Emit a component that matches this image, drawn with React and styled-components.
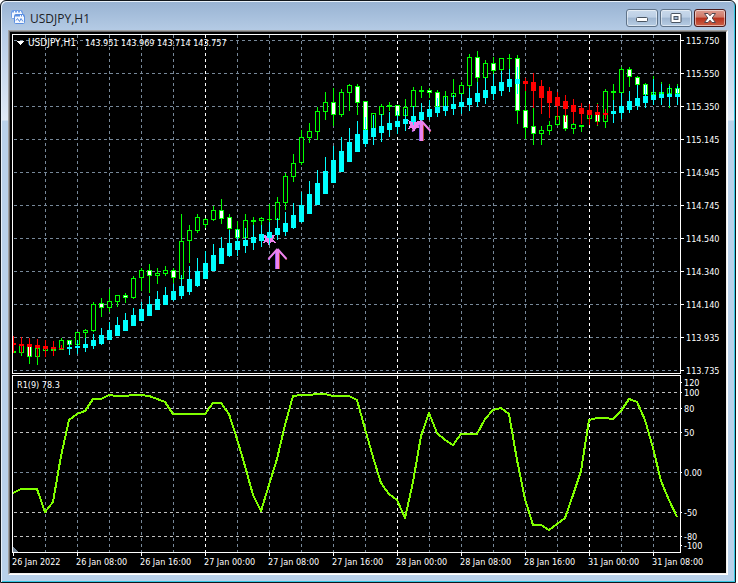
import React from 'react'

import styled, { createGlobalStyle } from 'styled-components'

const GlobalStyle = createGlobalStyle`
    body {
        margin: 0;
        background-color: white;
    }
`
const Window = styled.main`
    margin-right: 2px;
    padding: 1px 7px 7px;
    border: 1px solid #10161c;
    border-radius: 6px 6px 0 0;
    box-shadow: inset 1px 1px 0 #e8f1fa, inset -1px -1px 0 #35c8e4;
    background: linear-gradient(#98b3d3 0, #b7cde6 32px, #dfe9f5 119px, #b9d1ea 120px);
`
const TitleBar = styled.header`
    height: 28px;
    display: flex;
    align-items: center;
    padding: 0 2px 0 3px;
`
const Title = styled.h1`
    flex: 1;
    margin: 0 0 0 4px;
    padding-top: 6px;
    font-family: "Open Sans", "Noto Sans", sans-serif;
    font-size: 12px;
    line-height: 16px;
    font-weight: 400;
    color: #1c2126;
`
const Controls = styled.div`
    display: flex;
    gap: 2px;
    padding-top: 4px;
`
const Control = styled.button`
    width: 32px;
    height: 18px;
    padding: 0;
    display: flex;
    align-items: center;
    justify-content: center;
    border: 1px solid ${(props) => (props.$danger ? '#4b1b1c' : '#5f7389')};
    border-radius: 3px;
    box-shadow: inset 0 0 0 1px rgba(255, 255, 255, 0.5);
    background: ${(props) =>
        props.$danger
            ? 'linear-gradient(#dd9c90 0, #cf7766 45%, #b7301c 50%, #cc6148 100%)'
            : 'linear-gradient(#c9d9eb 0, #bccfe5 45%, #9fb6d1 50%, #b7cde4 100%)'};
`
const Frame = styled.section`
    border: 1px solid white;
    border-top-color: #a0a0a0;
    border-left-color: #a0a0a0;
`
const Client = styled.div`
    border: 1px solid #f0f0f0;
    border-top-color: #696969;
    border-left-color: #696969;
    background-color: black;
`
const Pane = styled.svg`
    display: block;
    width: 100%;
    height: auto;
    overflow: visible;
    shape-rendering: crispEdges;
`
const Label = styled.text`
    font-family: "DejaVu Sans Condensed", "Noto Sans", sans-serif;
    font-size: ${(props) => (props.$large ? '10px' : '9px')};
    fill: white;
`

const LIME = '#00ff00'
const CYAN = '#00ffff'
const RED = '#ff0000'
const VIOLET = '#ee82ee'
const GRID = '#778899'
const LEVEL = '#c0c0c0'

const LEFT = 12
const RIGHT = 680
const STEP = 8

// high, top, bottom, low, filled | smoothed: high, top, bottom, low, colour
const bars = [
    [351, 351, 353, 353, 0, 336, 343, 345, 353, RED],
    [345, 345, 353, 356, 0, 337, 344, 346, 353, RED],
    [346, 346, 357, 364, 1, 338, 344, 347, 356, RED],
    [348, 348, 357, 365, 0, 339, 345, 348, 357, RED],
    [348, 348, 351, 351, 0, 340, 346, 349, 357, RED],
    [349, 349, 351, 351, 0, 341, 347, 349, 356, RED],
    [338, 340, 350, 350, 0, 345, 348, 349, 350, RED],
    [340, 340, 345, 345, 1, 341, 347, 349, 355, CYAN],
    [332, 332, 345, 345, 0, 340, 346, 348, 354, CYAN],
    [329, 330, 333, 340, 0, 338, 344, 348, 352, CYAN],
    [302, 304, 331, 332, 0, 334, 340, 346, 349, CYAN],
    [298, 303, 308, 317, 1, 328, 335, 344, 345, CYAN],
    [289, 301, 308, 312, 0, 322, 330, 340, 340, CYAN],
    [295, 295, 302, 307, 0, 317, 325, 336, 336, CYAN],
    [293, 295, 298, 303, 1, 313, 320, 331, 331, CYAN],
    [276, 278, 298, 299, 0, 308, 315, 326, 326, CYAN],
    [268, 270, 278, 291, 0, 302, 309, 321, 321, CYAN],
    [264, 270, 276, 293, 1, 296, 304, 316, 316, CYAN],
    [268, 273, 276, 284, 0, 291, 299, 310, 310, CYAN],
    [266, 270, 274, 276, 0, 287, 295, 305, 305, CYAN],
    [268, 270, 278, 283, 1, 284, 291, 300, 301, CYAN],
    [214, 241, 279, 279, 0, 275, 286, 296, 299, CYAN],
    [225, 230, 241, 263, 0, 266, 279, 292, 295, CYAN],
    [214, 217, 231, 233, 0, 258, 271, 286, 287, CYAN],
    [218, 219, 225, 228, 0, 251, 263, 279, 279, CYAN],
    [206, 210, 220, 221, 0, 244, 255, 271, 271, CYAN],
    [199, 210, 219, 224, 1, 237, 248, 264, 264, CYAN],
    [214, 217, 229, 237, 1, 230, 243, 256, 257, CYAN],
    [221, 229, 238, 239, 1, 229, 241, 250, 256, CYAN],
    [214, 220, 238, 238, 0, 228, 240, 246, 253, CYAN],
    [217, 220, 222, 226, 0, 225, 237, 243, 250, CYAN],
    [217, 218, 221, 226, 0, 225, 234, 241, 247, CYAN],
    [204, 219, 220, 224, 0, 222, 232, 238, 245, CYAN],
    [197, 202, 220, 220, 0, 218, 228, 235, 240, CYAN],
    [173, 176, 203, 210, 0, 212, 223, 232, 236, CYAN],
    [154, 163, 177, 182, 0, 203, 215, 228, 229, CYAN],
    [130, 137, 163, 165, 0, 192, 205, 222, 223, CYAN],
    [123, 131, 138, 143, 0, 181, 194, 214, 214, CYAN],
    [107, 111, 132, 140, 0, 170, 183, 205, 205, CYAN],
    [92, 102, 112, 120, 0, 157, 171, 194, 194, CYAN],
    [88, 102, 115, 126, 1, 146, 160, 183, 183, CYAN],
    [89, 92, 115, 117, 0, 137, 151, 172, 172, CYAN],
    [84, 85, 93, 111, 0, 128, 142, 162, 162, CYAN],
    [84, 86, 103, 115, 1, 121, 134, 152, 152, CYAN],
    [101, 101, 130, 130, 1, 117, 130, 144, 147, CYAN],
    [113, 113, 130, 130, 0, 115, 128, 137, 145, CYAN],
    [104, 106, 115, 116, 0, 114, 126, 133, 142, CYAN],
    [102, 105, 107, 111, 0, 112, 123, 130, 137, CYAN],
    [105, 105, 116, 117, 1, 111, 121, 127, 134, CYAN],
    [99, 107, 116, 116, 0, 109, 119, 124, 131, CYAN],
    [87, 90, 107, 107, 0, 106, 116, 122, 125, CYAN],
    [86, 90, 92, 98, 0, 103, 112, 120, 122, CYAN],
    [88, 90, 93, 98, 1, 100, 109, 117, 120, CYAN],
    [90, 92, 107, 107, 1, 98, 107, 113, 117, CYAN],
    [91, 96, 107, 107, 0, 97, 106, 111, 116, CYAN],
    [79, 93, 97, 97, 0, 95, 104, 109, 115, CYAN],
    [82, 85, 94, 94, 0, 94, 102, 107, 114, CYAN],
    [54, 57, 86, 88, 0, 88, 98, 105, 111, CYAN],
    [51, 57, 78, 82, 1, 82, 93, 102, 107, CYAN],
    [60, 63, 78, 78, 0, 78, 90, 98, 104, CYAN],
    [57, 63, 71, 74, 1, 74, 86, 94, 100, CYAN],
    [58, 58, 70, 71, 0, 71, 82, 91, 96, CYAN],
    [54, 58, 59, 69, 0, 69, 79, 87, 92, CYAN],
    [55, 58, 111, 124, 1, 67, 79, 84, 94, CYAN],
    [91, 110, 128, 139, 1, 78, 81, 84, 91, RED],
    [108, 126, 134, 145, 1, 73, 82, 91, 108, RED],
    [126, 130, 134, 145, 0, 80, 86, 98, 114, RED],
    [121, 125, 131, 135, 0, 87, 91, 103, 118, RED],
    [116, 116, 125, 126, 0, 92, 97, 106, 120, RED],
    [115, 115, 129, 131, 1, 95, 101, 109, 122, RED],
    [123, 124, 129, 134, 0, 99, 105, 112, 123, RED],
    [125, 125, 127, 132, 0, 103, 108, 114, 124, RED],
    [114, 114, 119, 119, 0, 104, 110, 115, 125, RED],
    [103, 114, 122, 126, 1, 104, 112, 115, 125, RED],
    [89, 91, 122, 128, 0, 109, 113, 115, 119, RED],
    [84, 91, 93, 100, 0, 100, 111, 114, 123, CYAN],
    [67, 69, 93, 93, 0, 93, 106, 113, 119, CYAN],
    [67, 69, 77, 87, 1, 91, 101, 110, 113, CYAN],
    [76, 77, 85, 85, 1, 85, 98, 106, 110, CYAN],
    [83, 84, 95, 95, 1, 85, 96, 103, 108, CYAN],
    [76, 92, 95, 95, 0, 79, 95, 100, 105, CYAN],
    [82, 92, 94, 94, 0, 84, 94, 98, 105, CYAN],
    [84, 88, 94, 108, 0, 86, 94, 97, 106, CYAN],
    [84, 88, 94, 94, 1, 86, 94, 97, 105, CYAN],
]

const oscillator = [
    493, 489, 489, 489, 512, 502, 456, 420, 414, 411, 399, 399, 395, 396, 396, 395, 395, 396, 399, 402, 414, 414, 414, 414,
    414, 403, 403, 414, 439, 466, 495, 511, 485, 459, 425, 396, 395, 395, 394, 394, 396, 396, 396, 400, 429, 457, 483, 494,
    500, 518, 482, 436, 413, 433, 440, 445, 434, 434, 434, 419, 410, 408, 414, 460, 499, 525, 525, 530, 524, 518, 495, 471,
    420, 418, 418, 419, 411, 399, 402, 420, 448, 481, 500, 517,
]

const prices = ['115.750', '115.550', '115.350', '115.145', '114.945', '114.745', '114.540', '114.340', '114.140', '113.935', '113.735']

const levels = [
    { y: 382, name: '120' },
    { y: 392, name: '100', color: LEVEL },
    { y: 408, name: '80', color: LEVEL },
    { y: 432, name: '50', color: LEVEL },
    { y: 472, name: '0.00', color: GRID },
    { y: 512, name: '-50', color: LEVEL },
    { y: 536, name: '-80', color: LEVEL },
    { y: 545, name: '-100' },
]

const times = [
    '26 Jan 2022',
    '26 Jan 08:00',
    '26 Jan 16:00',
    '27 Jan 00:00',
    '27 Jan 08:00',
    '27 Jan 16:00',
    '28 Jan 00:00',
    '28 Jan 08:00',
    '28 Jan 16:00',
    '31 Jan 00:00',
    '31 Jan 08:00',
]

const columns = Array.from({ length: 20 }, (_, i) => 45 + i * 32)
const days = [205, 397, 589]

const barX = (i) => LEFT + 1 + i * STEP

const RowLine = ({ y, color }) => (
    <line x1={LEFT + 2} x2={RIGHT} y1={y + 0.5} y2={y + 0.5} stroke={color} strokeDasharray="3 3" />
)

const ColumnLines = ({ top, bottom }) =>
    columns.map((x) => (
        <line
            key={x}
            x1={x + 0.5}
            x2={x + 0.5}
            y1={top}
            y2={bottom}
            stroke={days.includes(x) ? 'white' : GRID}
            strokeDasharray="3 3"
        />
    ))

const Border = ({ top, bottom }) => (
    <rect x={LEFT + 0.5} y={top + 0.5} width={RIGHT - LEFT} height={bottom - top} fill="none" stroke="white" />
)

const Candle = ({ x, bar }) => {
    const [high, top, bottom, low, filled] = bar
    return (
        <g>
            <rect x={x} y={high} width={1} height={low - high} fill={LIME} />
            <rect x={x - 2} y={top} width={5} height={bottom - top} fill={LIME} />
            {bottom - top > 2 && (
                <rect x={x - 1} y={top + 1} width={3} height={bottom - top - 2} fill={filled ? 'white' : 'black'} />
            )}
        </g>
    )
}

const SmoothBar = ({ x, bar }) => {
    const [high, top, bottom, low, color] = bar.slice(5)
    return (
        <g fill={color}>
            <rect x={x} y={high} width={1} height={low - high} />
            <rect x={x - 2} y={top} width={5} height={bottom - top} />
        </g>
    )
}

const Star = ({ x, y }) => (
    <path
        transform={`translate(${x} ${y})`}
        d="M0 -7 L2 -3 L7 -5 L4 0 L7 4 L2 3 L0 7 L-2 3 L-6 4 L-4 0 L-6 -5 L-2 -3 Z"
        fill={VIOLET}
    />
)

const Arrow = ({ x, y }) => (
    <g transform={`translate(${x} ${y})`} fill="none" shapeRendering="auto">
        <path d="M2.5 3 V21 M1 2 L10 12" stroke="#b04a28" />
        <path d="M-1.5 4 V21 M0 2 L-9 12" stroke="#8a5cf0" />
        <path d="M0.5 1 V21" stroke={VIOLET} strokeWidth="3" />
        <path d="M0.5 1 L-8.5 11 M0.5 1 L9.5 11" stroke={VIOLET} strokeWidth="2" />
    </g>
)

const PricePane = () => (
    <Pane viewBox="10 32 716 342" role="img" aria-label="USDJPY,H1">
        <ColumnLines top={35} bottom={373} />
        {prices.map((price, i) => (
            <RowLine key={price} y={40 + i * 33} color={GRID} />
        ))}
        {bars.map((bar, i) => (
            <Candle key={i} x={barX(i)} bar={bar} />
        ))}
        <Star x={269} y={239} />
        <Star x={414} y={125} />
        {bars.map((bar, i) => (
            <SmoothBar key={i} x={barX(i)} bar={bar} />
        ))}
        <Arrow x={277} y={248} />
        <Arrow x={421} y={120} />
        <rect x={10} y={34} width={2} height={340} fill="black" />
        <Border top={34} bottom={373} />
        {prices.map((price, i) => (
            <g key={price}>
                <rect x={RIGHT} y={40 + i * 33} width={4} height={1} fill="white" />
                <Label x={686} y={44 + i * 33}>
                    {price}
                </Label>
            </g>
        ))}
        <path d="M16 41 H24 L20 45 Z" fill="white" />
        <Label x={28} y={46} $large>
            USDJPY,H1
        </Label>
        <Label x={85} y={46}>
            143.951 143.969 143.714 143.757
        </Label>
    </Pane>
)

const OscillatorPane = () => (
    <Pane viewBox="10 374 716 199" role="img" aria-label="R1(9)">
        <ColumnLines top={376} bottom={552} />
        {levels
            .filter((level) => level.color)
            .map((level) => (
                <RowLine key={level.name} y={level.y} color={level.color} />
            ))}
        <polyline
            points={oscillator.map((y, i) => `${barX(i)},${y}`).join(' ')}
            fill="none"
            stroke="#80ff00"
            strokeWidth="2"
            strokeLinejoin="round"
        />
        <path d="M13 547 L18 552 H13 Z" fill={GRID} />
        <Border top={375} bottom={552} />
        {levels.map((level) => (
            <g key={level.name}>
                <rect x={RIGHT} y={level.y} width={2} height={1} fill="white" />
                <Label x={684} y={level.y + 4}>
                    {level.name}
                </Label>
            </g>
        ))}
        {times.map((time, i) => (
            <g key={time}>
                <rect x={13 + i * 64} y={552} width={1} height={4} fill="white" />
                <Label x={12 + i * 64} y={565}>
                    {time}
                </Label>
            </g>
        ))}
        <Label x={17} y={388}>
            R1(9) 78.3
        </Label>
    </Pane>
)

const ChartIcon = () => (
    <svg width="15" height="15" viewBox="0 0 15 15" fill="none" aria-hidden="true">
        <rect x="0.5" y="1.5" width="11" height="8" rx="1" fill="#f4f8ff" stroke="#6f9ee6" />
        <path d="M1 2.5 H11" stroke="#6f9ee6" strokeWidth="2" strokeDasharray="2 1" />
        <rect x="3.5" y="5.5" width="10" height="9" rx="1" fill="#f4f8ff" stroke="#5b8fe0" />
        <path d="M4 6.5 H13" stroke="#5b8fe0" strokeWidth="2" strokeDasharray="5 1 1 1" />
        <path d="M5 11.5 L6.5 9.5 L8.5 12.5 L10 9.5 L12 12.5" stroke="#5b8fe0" />
    </svg>
)

const App = () => {
    return (
        <>
            <GlobalStyle />
            <Window>
                <TitleBar>
                    <ChartIcon />
                    <Title>USDJPY,H1</Title>
                    <Controls>
                        <Control aria-label="Minimize">
                            <svg width="12" height="10" viewBox="0 0 12 10">
                                <rect x="0.5" y="4.5" width="11" height="4" rx="1" fill="white" stroke="#4a5562" />
                            </svg>
                        </Control>
                        <Control aria-label="Maximize">
                            <svg width="12" height="10" viewBox="0 0 12 10" fill="none">
                                <rect x="1" y="0.5" width="10" height="9" rx="1" fill="white" stroke="#4a5562" />
                                <rect x="4" y="3.5" width="4" height="3" fill="#9fb6d1" stroke="#4a5562" />
                            </svg>
                        </Control>
                        <Control aria-label="Close" $danger>
                            <svg width="12" height="10" viewBox="0 0 12 10" fill="none">
                                <path
                                    d="M0.5 0.5 H4 L6 2.8 L8 0.5 H11.5 L8.2 5 L11.5 9.5 H8 L6 7.2 L4 9.5 H0.5 L3.8 5 Z"
                                    fill="white"
                                    stroke="#53474f"
                                />
                            </svg>
                        </Control>
                    </Controls>
                </TitleBar>
                <Frame>
                    <Client>
                        <PricePane />
                        <OscillatorPane />
                    </Client>
                </Frame>
            </Window>
        </>
    )
}

export default App
